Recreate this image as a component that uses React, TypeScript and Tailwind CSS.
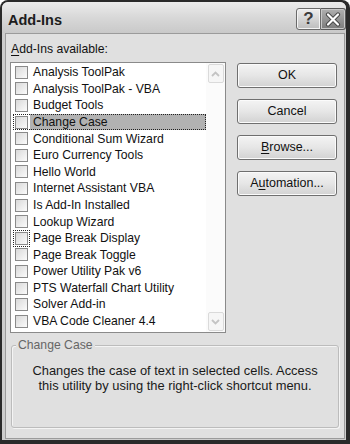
import React from "react";

const addIns = [
  "Analysis ToolPak",
  "Analysis ToolPak - VBA",
  "Budget Tools",
  "Change Case",
  "Conditional Sum Wizard",
  "Euro Currency Tools",
  "Hello World",
  "Internet Assistant VBA",
  "Is Add-In Installed",
  "Lookup Wizard",
  "Page Break Display",
  "Page Break Toggle",
  "Power Utility Pak v6",
  "PTS Waterfall Chart Utility",
  "Solver Add-in",
  "VBA Code Cleaner 4.4",
];

const SELECTED = 3;
const FOCUSED_BOX = 10;

function CheckBox({ focus }: { focus?: boolean }) {
  return (
    <span
      className={
        focus
          ? "w-[13px] h-[13px] shrink-0 border border-[#8a8a8a] bg-gradient-to-br from-[#d9d9d9] to-[#fbfbfb] outline outline-1 outline-dotted outline-[#222] outline-offset-[1px]"
          : "w-[13px] h-[13px] shrink-0 border border-[#8a8a8a] bg-gradient-to-br from-[#d9d9d9] to-[#fbfbfb]"
      }
    />
  );
}

function ScrollArrow({ up }: { up?: boolean }) {
  return (
    <div className="w-[16px] h-[19px] mx-auto rounded-[2px] border border-[#dadada] bg-[#f6f6f6] flex items-center justify-center">
      <svg width="9" height="6" viewBox="0 0 9 6">
        <path
          d={up ? "M1 5 L4.5 1.5 L8 5" : "M1 1 L4.5 4.5 L8 1"}
          fill="none"
          stroke="#c4c4c4"
          strokeWidth="1.8"
        />
      </svg>
    </div>
  );
}

function DialogButton({ children }: { children: React.ReactNode }) {
  return (
    <button className="w-[100px] h-[25px] rounded-[3px] border border-[#6f6f6f] bg-gradient-to-b from-[#f4f4f4] via-[#e6e6e6] to-[#d2d2d2] shadow-[inset_0_0_0_1px_#fbfbfb] text-[12.5px] text-[#111] flex items-center justify-center">
      {children}
    </button>
  );
}

export default function App() {
  return (
    <div className="w-[350px] h-[444px] bg-[#2a2a2a] pt-[2px] pl-[2px] pr-[4px] pb-[4px] rounded-t-[8px] font-['Liberation_Sans',Arial,sans-serif]">
      <div className="h-full flex flex-col bg-[#cdcdcd] rounded-t-[6px]">
        {/* title bar */}
        <div className="h-[31px] shrink-0 flex items-start rounded-t-[6px] bg-gradient-to-b from-[#ececec] via-[#d8d8d8] to-[#c9c9c9] pl-[6px]">
          <span className="mt-[9px] text-[14.5px] font-bold text-[#1c1c1c] leading-[18px]">
            Add-Ins
          </span>
          <div className="ml-auto mt-[6px] flex">
            <div className="w-[25px] h-[22px] rounded-l-[3px] border border-[#6a6a6a] bg-gradient-to-b from-[#eeeeee] to-[#bdbdbd] shadow-[inset_0_0_0_1px_#f4f4f4] flex items-center justify-center text-[17px] font-bold text-[#3c3c3c]">
              ?
            </div>
            <div className="w-[25px] h-[22px] rounded-r-[3px] border border-l-0 border-[#5a5a5a] bg-gradient-to-b from-[#b0b0b0] to-[#7c7c7c] shadow-[inset_0_0_0_1px_#c8c8c8] flex items-center justify-center">
              <svg width="16" height="15" viewBox="0 0 16 15">
                <path d="M3 2.5 L13 12.5 M13 2.5 L3 12.5" stroke="#4a4a4a" strokeWidth="4.2" strokeLinecap="round" />
                <path d="M3 2.5 L13 12.5 M13 2.5 L3 12.5" stroke="#ffffff" strokeWidth="2.2" strokeLinecap="round" />
              </svg>
            </div>
          </div>
        </div>

        {/* client area */}
        <div className="flex-1 ml-[3px] mr-[1px] mb-[1px] border border-[#9b9b9b] bg-[#e0e0e0] flex flex-col pl-[4px] pr-[3px] pt-[8px] text-[12.2px] text-[#111]">
          <div className="leading-[14px] ml-[1px]">
            <span className="underline underline-offset-2">A</span>dd-Ins available:
          </div>

          <div className="flex mt-[6px]">
            <div className="w-[216px] h-[271px] border border-[#8a8a8a] bg-white flex">
              <div className="flex-1 pt-[1px]">
                {addIns.map((name, i) => (
                  <div key={name} className="relative h-[16.6px] flex items-center pl-[4px]">
                    <CheckBox focus={i === FOCUSED_BOX} />
                    <span
                      className={
                        i === SELECTED
                          ? "ml-[2px] pl-[3px] flex-1 h-full flex items-center bg-[#b2b2b2] whitespace-nowrap"
                          : "ml-[2px] pl-[3px] flex-1 h-full flex items-center whitespace-nowrap"
                      }
                    >
                      {name}
                    </span>
                    {i === SELECTED && (
                      <span className="absolute left-[2px] right-0 top-0 bottom-0 border border-dotted border-[#222]" />
                    )}
                  </div>
                ))}
              </div>
              <div className="w-[19px] flex flex-col justify-between py-[1px] bg-[#fbfbfb]">
                <ScrollArrow up />
                <ScrollArrow />
              </div>
            </div>

            <div className="ml-[11px] flex flex-col gap-[11px] pt-[1px]">
              <DialogButton>OK</DialogButton>
              <DialogButton>Cancel</DialogButton>
              <DialogButton>
                <span className="underline underline-offset-2">B</span>rowse...
              </DialogButton>
              <DialogButton>
                A<span className="underline underline-offset-2">u</span>tomation...
              </DialogButton>
            </div>
          </div>

          {/* description group */}
          <div className="relative mt-[12px] ml-[1px] mr-[2px] h-[83px] rounded-[3px] border border-[#bcbcbc] shadow-[inset_1px_1px_0_#f4f4f4,1px_1px_0_#f4f4f4]">
            <span className="absolute left-[4px] top-[-8px] px-[2px] bg-[#e0e0e0] leading-[14px] text-[#666]">
              Change Case
            </span>
            <p className="pt-[17px] text-center text-[12.9px] leading-[15px] text-[#1a1a1a]">
              Changes the case of text in selected cells. Access
              <br />
              this utility by using the right-click shortcut menu.
            </p>
          </div>
        </div>
      </div>
    </div>
  );
}
